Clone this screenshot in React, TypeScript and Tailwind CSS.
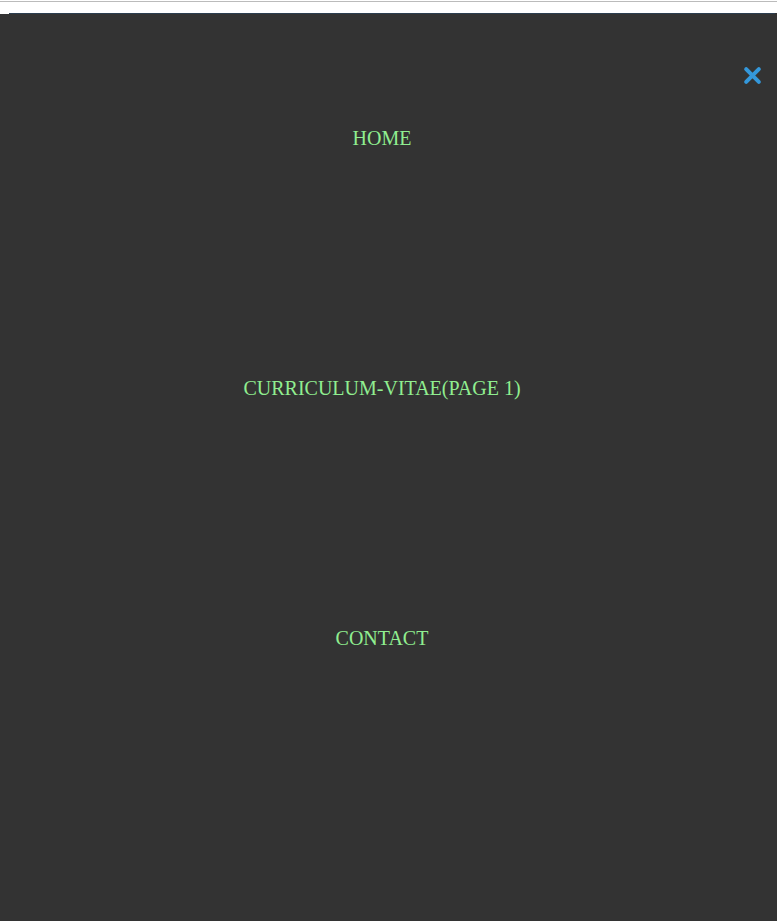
export default function App() {
  const links = ['HOME', 'CURRICULUM-VITAE(PAGE 1)', 'CONTACT'];

  return (
    <div className="relative min-h-screen bg-white">
      {/* page top rule */}
      <div className="h-px mt-px bg-[#bbbbbb]" />

      {/* overlay menu */}
      <div className="absolute left-0 right-0 top-[12px] bottom-0 h-[909px] bg-[#333333]">
        <div className="ml-[9px] mr-[2px] h-px bg-[#2c3e50]" />
        <div className="absolute left-0 top-0 w-[9px] h-px bg-white" />
        <button className="absolute right-[15px] top-[52px] w-5 h-5 flex items-center justify-center text-[#3498db]">
          <svg width="19" height="19" viewBox="0 0 18 18" fill="none">
            <path d="M3 3L15 15M15 3L3 15" stroke="currentColor" strokeWidth="3.8" strokeLinecap="round" />
          </svg>
        </button>

        <nav className="pt-[113px] pr-[13px] flex flex-col items-center gap-[227px] font-['Liberation_Serif',serif] text-[20px] leading-[23px] text-[#90ee90]">
          {links.map((l) => (
            <a key={l} href="#" className="block">
              {l}
            </a>
          ))}
        </nav>
      </div>
    </div>
  );
}
